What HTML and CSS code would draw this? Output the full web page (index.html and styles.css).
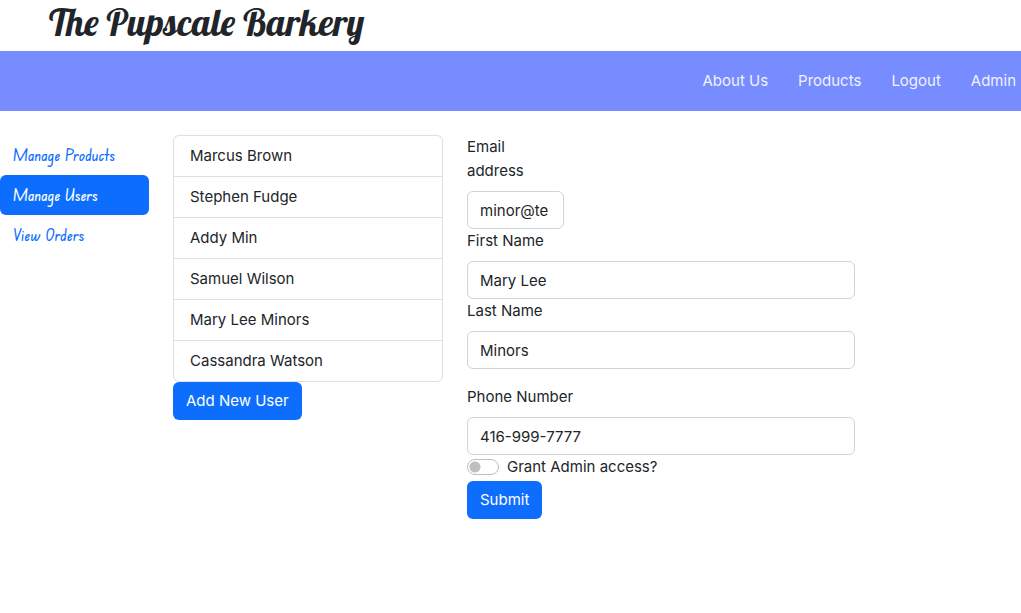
FILE: index.html
```html
<!DOCTYPE html>
<html lang="en">
<head>
<meta charset="utf-8">
<meta name="viewport" content="width=device-width, initial-scale=1">
<title>The Pupscale Barkery</title>
<link rel="stylesheet" href="styles.css">
</head>
<body>
<header class="site-header">
  <h1 class="brand">The Pupscale Barkery</h1>
</header>
<nav class="navbar" aria-label="Main">
  <a class="nav-link" href="#about">About Us</a>
  <a class="nav-link" href="#products">Products</a>
  <a class="nav-link" href="#logout">Logout</a>
  <a class="nav-link" href="#admin">Admin</a>
</nav>
<main class="layout">
  <nav class="side" aria-label="Admin">
    <a class="side-link" href="#manage-products">Manage Products</a>
    <a class="side-link active" href="#manage-users" aria-current="page">Manage Users</a>
    <a class="side-link" href="#orders">View Orders</a>
  </nav>
  <section class="users">
    <ul class="user-list">
      <li class="user">Marcus Brown</li>
      <li class="user">Stephen Fudge</li>
      <li class="user">Addy Min</li>
      <li class="user">Samuel Wilson</li>
      <li class="user">Mary Lee Minors</li>
      <li class="user">Cassandra Watson</li>
    </ul>
    <button class="btn" type="button">Add New User</button>
  </section>
  <form class="user-form">
    <div class="field field-narrow">
      <label class="label" for="email">Email address</label>
      <input class="input" id="email" type="text" value="minor@te">
    </div>
    <div class="field">
      <label class="label" for="first">First Name</label>
      <input class="input" id="first" type="text" value="Mary Lee">
    </div>
    <div class="field field-spaced">
      <label class="label" for="last">Last Name</label>
      <input class="input" id="last" type="text" value="Minors">
    </div>
    <div class="field">
      <label class="label" for="phone">Phone Number</label>
      <input class="input" id="phone" type="text" value="416-999-7777">
    </div>
    <div class="check">
      <input class="switch" id="admin" type="checkbox" role="switch">
      <label for="admin">Grant Admin access?</label>
    </div>
    <button class="btn" type="submit">Submit</button>
  </form>
</main>
</body>
</html>
```
FILE: styles.css
```css
*, *::before, *::after { box-sizing: border-box; }

body {
  margin: 0;
  background: #fff;
  color: #212529;
  font-family: "Inter", sans-serif;
  font-size: 15px;
  line-height: 24px;
}

.site-header { padding: 0 49px 7px; }

.brand {
  margin: 0;
  font-family: "Lobster", "Liberation Serif", cursive;
  font-size: 37px;
  font-weight: 500;
  line-height: 44px;
  white-space: nowrap;
}

.navbar {
  display: flex;
  justify-content: flex-end;
  align-items: center;
  gap: 30px;
  padding: 18px 5px;
  background: #768cff;
}

.nav-link { color: #f0f2ff; text-decoration: none; }

.layout {
  display: grid;
  grid-template-columns: 149fr 270fr 388fr 142fr;
  gap: 24px;
  align-items: start;
  padding-top: 24px;
}

.side { display: flex; flex-direction: column; }

.side-link {
  padding: 8px 13px;
  border-radius: 6px;
  color: #0d6efd;
  font-family: "Edu NSW ACT Foundation", "Edu SA Beginner", "Lato", cursive;
  font-size: 16px;
  font-weight: 500;
  text-decoration: none;
}

.side-link.active { background: #0d6efd; color: #fff; }

.user-list {
  margin: 0;
  padding: 0;
  border: 1px solid #dedfe0;
  border-radius: 6px;
  list-style: none;
}

.user { padding: 8px 16px; }
.user + .user { border-top: 1px solid #dedfe0; }

.btn {
  display: block;
  padding: 7px 13px;
  border: 0;
  border-radius: 6px;
  background: #0d6efd;
  color: #fff;
  font: inherit;
}

.field-narrow { width: 25%; }
.field-spaced { margin-bottom: 16px; }
.label { display: block; margin-bottom: 8px; }

.input {
  display: block;
  width: 100%;
  height: 38px;
  padding: 6px 12px;
  border: 1px solid #ced4da;
  border-radius: 6px;
  background: #fff;
  color: #212529;
  font: inherit;
}

.check {
  display: flex;
  align-items: center;
  gap: 8px;
  margin-bottom: 2px;
}

.switch {
  appearance: none;
  width: 32px;
  height: 16px;
  margin: 0;
  border: 1px solid #bfbfbf;
  border-radius: 8px;
  background: radial-gradient(circle at 7px 7px, #bfbfbf 5px, #fff 6px);
}

.switch:checked {
  border-color: #0d6efd;
  background: radial-gradient(circle at 23px 7px, #fff 5px, #0d6efd 6px);
}
```
